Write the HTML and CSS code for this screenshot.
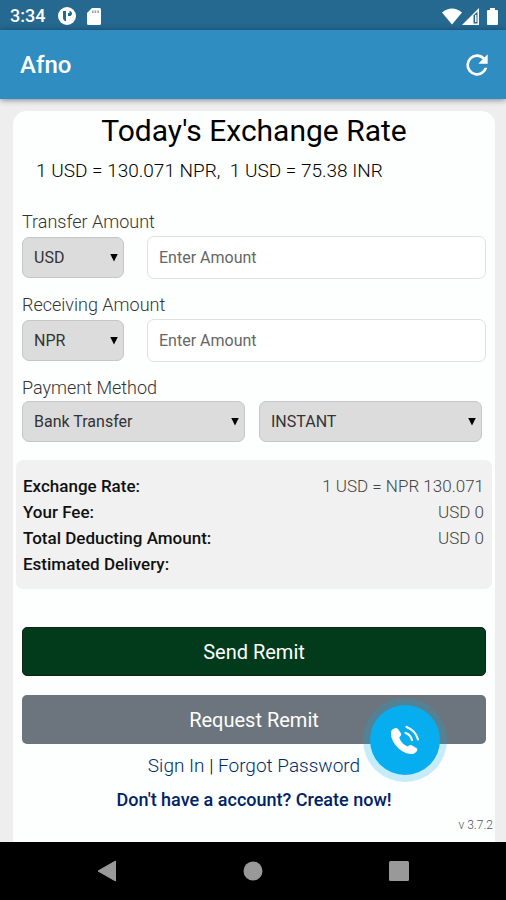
FILE: index.html
```html
<!DOCTYPE html>
<html lang="en">
<head>
<meta charset="utf-8">
<meta name="viewport" content="width=device-width, initial-scale=1">
<title>Afno</title>
<link rel="stylesheet" href="styles.css">
</head>
<body>
<div class="status-bar">
  <span class="clock">3:34</span>
  <svg class="status-app" width="18" height="18" viewBox="0 0 18 18" aria-hidden="true"><circle cx="9" cy="9" r="9" fill="#fff"/><path d="M5 4h3v10H7q-2-1-2-3zM10 4h2.500Q14 5 14 6.500T12.500 9H10z" fill="#256890"/><path d="M10 4h1.500v2H10z" fill="#fff"/></svg>
  <svg class="status-card" width="14" height="17" viewBox="0 0 14 17" aria-hidden="true"><path d="M5 0h7.500Q14 0 14 1.500v14q0 1.500-1.500 1.500h-11Q0 17 0 15.500V5z" fill="#fff"/><path d="M5 2.500h1.500V5H5zM7.700 2.500h1.500V5H7.700zM10.400 2.500h1.500V5h-1.500z" fill="#7da4bb"/></svg>
  <span class="status-space"></span>
  <svg width="20" height="17" viewBox="0 0 20 17" aria-hidden="true"><path d="M0 4.500Q10-3.500 20 4.500L10 16.500z" fill="#fff"/></svg>
  <svg width="17" height="17" viewBox="0 0 17 17" aria-hidden="true"><path d="M0 17 17 0v17z" fill="#fff"/><path d="M11.500 7.500 15.500 3.500v12h-4z" fill="#256890"/><path d="M13 7h1.500v7H13z" fill="#fff"/></svg>
  <svg class="battery" width="11" height="17" viewBox="0 0 11 17" aria-hidden="true"><path d="M3 0h5v2h2q1 0 1 1v13q0 1-1 1H1q-1 0-1-1V3q0-1 1-1h2z" fill="#fff"/></svg>
</div>
<header class="app-bar">
  <span class="app-name">Afno</span>
  <button class="refresh" type="button" aria-label="Refresh">
    <svg width="32" height="32" viewBox="0 0 24 24" aria-hidden="true"><path d="M17.650 6.350A7.950 7.950 0 0 0 12 4a8 8 0 1 0 7.730 10h-2.080A6 6 0 1 1 12 6c1.660 0 3.140.690 4.220 1.780L13 11h7V4z" fill="#fff"/></svg>
  </button>
</header>
<main class="content">
  <form class="card">
    <h1 class="title">Today's Exchange Rate</h1>
    <p class="rates">1 USD = 130.071 NPR,&nbsp; 1 USD = 75.38 INR</p>

    <label class="label" for="send-amount">Transfer Amount</label>
    <div class="field-row">
      <div class="select currency"><select aria-label="Transfer currency"><option>USD</option></select></div>
      <input class="amount" id="send-amount" type="text" placeholder="Enter Amount">
    </div>

    <label class="label" for="receive-amount">Receiving Amount</label>
    <div class="field-row">
      <div class="select currency"><select aria-label="Receiving currency"><option>NPR</option></select></div>
      <input class="amount" id="receive-amount" type="text" placeholder="Enter Amount">
    </div>

    <label class="label" for="method">Payment Method</label>
    <div class="method-row">
      <div class="select"><select id="method"><option>Bank Transfer</option></select></div>
      <div class="select"><select aria-label="Delivery speed"><option>INSTANT</option></select></div>
    </div>

    <dl class="summary">
      <div class="summary-row"><dt>Exchange Rate:</dt><dd>1 USD = NPR 130.071</dd></div>
      <div class="summary-row"><dt>Your Fee:</dt><dd>USD 0</dd></div>
      <div class="summary-row"><dt>Total Deducting Amount:</dt><dd>USD 0</dd></div>
      <div class="summary-row"><dt>Estimated Delivery:</dt><dd></dd></div>
    </dl>

    <button class="action send" type="button">Send Remit</button>
    <div class="request-wrap">
      <button class="action request" type="button">Request Remit</button>
      <button class="call" type="button" aria-label="Call support">
        <svg width="32" height="32" viewBox="0 0 32 32" fill="none" aria-hidden="true"><path d="M2.500 6.500C4.500 4 7.500 3 9 5l2.900 4.300c.8 1.400.2 2.500-1.600 3.900 1 4.200 4.200 7.600 8.600 9.300 1.500-1.500 2.900-1.700 4.200-1l4.600 2.700c1.600 1.300-.1 4.300-2.900 5.500C14 32.500-1 17 2.500 6.500z" fill="#fff"/><path d="M16.500 9q4.800 1.500 6.500 7M17.500 3Q26.500 6.500 29 15.500" stroke="#fff" stroke-width="2.200" stroke-linecap="round"/></svg>
      </button>
    </div>
    <p class="links"><a href="#signin">Sign In</a> | <a href="#forgot">Forgot Password</a></p>
    <p class="signup"><a href="#create">Don't have a account? Create now!</a></p>
    <p class="version">v 3.7.2</p>
  </form>
</main>
<nav class="system-nav" aria-label="System navigation">
  <button type="button" aria-label="Back"><svg width="20" height="22" viewBox="0 0 20 22" aria-hidden="true"><path d="M18.500 1v20L1 11z" fill="#999" stroke="#999" stroke-linejoin="round"/></svg></button>
  <button type="button" aria-label="Home"><svg width="20" height="20" viewBox="0 0 20 20" aria-hidden="true"><circle cx="10" cy="10" r="9.500" fill="#999"/></svg></button>
  <button type="button" aria-label="Recent apps"><svg width="20" height="20" viewBox="0 0 20 20" aria-hidden="true"><rect width="20" height="20" rx="1.500" fill="#999"/></svg></button>
</nav>
</body>
</html>
```
FILE: styles.css
```css
* { box-sizing: border-box; }

body {
  margin: 0;
  min-height: 100vh;
  display: flex;
  flex-direction: column;
  background: #eee;
  color: #000;
  font-family: Roboto, "Liberation Sans", sans-serif;
  font-size: 18px;
  font-weight: 300;
  line-height: 26px;
}

h1, p, dl, dd { margin: 0; }
button, input, select { font: inherit; }
button { padding: 0; border: 0; cursor: pointer; }
a { text-decoration: none; }
svg { display: block; }

.status-bar {
  display: flex;
  align-items: center;
  height: 30px;
  padding: 2px 8px 0 10px;
  background: #256890;
}
.clock { color: #fff; font-weight: 500; }
.status-app { margin-left: 13px; }
.status-card { margin-left: 11px; }
.status-space { flex: 1; }
.battery { margin-left: 8px; }

.app-bar {
  display: flex;
  align-items: center;
  justify-content: space-between;
  height: 69px;
  padding: 0 13px 0 20px;
  background: #308dc2;
  box-shadow: 0 1px 6px rgba(0, 0, 0, .45);
}
.app-name { color: #fff; font-size: 24px; font-weight: 500; }
.refresh { background: none; }

.content {
  flex: 1;
  display: flex;
  padding: 12px 11px 0 13px;
}
.card {
  flex: 1;
  padding: 4px 9px 0;
  background: #fdfefe;
  border-radius: 14px 14px 0 0;
}
.title {
  font-size: 30px;
  font-weight: 400;
  line-height: 32px;
  text-align: center;
}
.rates { margin: 11px 0 25px; padding-left: 14px; font-size: 19px; }

.label { display: block; width: fit-content; color: #333; }
.field-row { display: flex; align-items: center; gap: 23px; margin: 1px 0 13px; }
.method-row {
  display: grid;
  grid-template-columns: 1fr 1fr;
  gap: 14px;
  margin-right: 4px;
}

.select { display: grid; align-items: center; }
.select select,
.select::after { grid-area: 1 / 1; }
.select select {
  appearance: none;
  width: 100%;
  height: 41px;
  padding: 0 11px;
  border: 1px solid #c6c6c6;
  border-radius: 7px;
  background: #dcdcdc;
  color: #333;
  font-size: 16px;
  font-weight: 400;
}
.select::after {
  content: "";
  justify-self: end;
  width: 8px;
  height: 8px;
  margin-right: 6px;
  background: #000;
  clip-path: polygon(0 0, 100% 0, 50% 100%);
  pointer-events: none;
}
.currency { flex: 0 0 102px; }
.amount {
  flex: 1;
  min-width: 0;
  height: 43px;
  padding: 0 11px;
  border: 1px solid #e0e2e2;
  border-radius: 7px;
  background: #fff;
  font-size: 16px;
  font-weight: 400;
}
.amount::placeholder { color: #666; opacity: 1; }

.summary {
  margin: 18px -6px 38px;
  padding: 13px 8px 12px 7px;
  border-radius: 7px;
  background: #f1f1f1;
}
.summary-row { display: flex; justify-content: space-between; }
.summary-row dt { font-size: 17px; font-weight: 500; color: #111; }
.summary-row dd { font-size: 17px; color: #444; }

.action {
  display: block;
  width: 100%;
  height: 49px;
  border-radius: 5px;
  color: #fff;
  font-size: 20px;
  font-weight: 400;
}
.send { background: #013b1b; border: 1px solid #112217; }
.request { background: #6c757d; }
.request-wrap { position: relative; margin-top: 19px; }

.call {
  position: absolute;
  top: 10px;
  right: 46px;
  width: 70px;
  height: 70px;
  display: grid;
  place-items: center;
  border-radius: 50%;
  background: #06aeef;
  box-shadow: 0 0 0 7px rgba(6, 174, 239, .22);
}

.links { margin-top: 9px; text-align: center; font-size: 19px; }
.links a { color: #002b6b; }
.signup { margin-top: 8px; text-align: center; font-weight: 500; }
.signup a { color: #002266; }
.version {
  margin: 3px -7px 0 0;
  text-align: right;
  font-size: 12px;
  line-height: 18px;
  color: #555;
}

.system-nav {
  display: flex;
  align-items: center;
  justify-content: center;
  gap: 126px;
  height: 58px;
  background: #000;
}
.system-nav button { background: none; }
```
